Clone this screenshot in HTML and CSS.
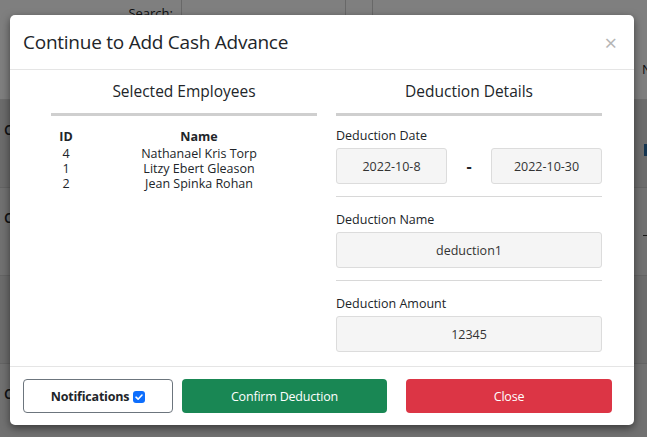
FILE: index.html
```html
<!DOCTYPE html>
<html lang="en">
<head>
<meta charset="utf-8">
<title>Continue to Add Cash Advance</title>
<link rel="stylesheet" href="styles.css">
</head>
<body>
<div class="page">
  <div class="page-top">
    <div class="search-label">Search:</div>
    <div class="search-box"></div>
    <div class="search-gap"></div>
    <div class="search-rest"><span class="edge-text">N</span></div>
  </div>
  <div class="page-table">
    <div class="prow prow-a"><span class="cell-c">C</span><span class="cell-r"><span class="blue-mark"></span></span></div>
    <div class="prow prow-b"><span class="cell-c">C</span><span class="cell-r"><span class="dash-mark"></span></span></div>
    <div class="prow prow-a"><span class="cell-c"></span><span class="cell-r"></span></div>
    <div class="prow prow-b"><span class="cell-c">C</span><span class="cell-r"></span></div>
  </div>
</div>
<div class="backdrop"></div>

<div class="modal">
  <div class="modal-header">
    <h4 class="modal-title">Continue to Add Cash Advance</h4>
    <span class="close">&times;</span>
  </div>
  <div class="modal-body">
    <div class="col">
      <h5 class="col-title">Selected Employees</h5>
      <hr class="col-rule">
      <table class="emp-table">
        <thead>
          <tr><th class="c-id">ID</th><th>Name</th></tr>
        </thead>
        <tbody>
          <tr><td class="c-id">4</td><td>Nathanael Kris Torp</td></tr>
          <tr><td class="c-id">1</td><td>Litzy Ebert Gleason</td></tr>
          <tr><td class="c-id">2</td><td>Jean Spinka Rohan</td></tr>
        </tbody>
      </table>
    </div>
    <div class="col">
      <h5 class="col-title">Deduction Details</h5>
      <hr class="col-rule">
      <div class="group">
        <label class="label">Deduction Date</label>
        <div class="date-row">
          <div class="field">2022-10-8</div>
          <span class="dash">-</span>
          <div class="field">2022-10-30</div>
        </div>
      </div>
      <hr class="sep">
      <div class="group">
        <label class="label">Deduction Name</label>
        <div class="field">deduction1</div>
      </div>
      <hr class="sep">
      <div class="group">
        <label class="label">Deduction Amount</label>
        <div class="field">12345</div>
      </div>
    </div>
  </div>
  <div class="modal-footer">
    <button class="btn btn-notify">Notifications <span class="check"><svg viewBox="0 0 12 12" width="12" height="12"><path d="M3 6.2 L5.1 8.2 L9 4" fill="none" stroke="#fff" stroke-width="1.6" stroke-linecap="round" stroke-linejoin="round"/></svg></span></button>
    <button class="btn btn-confirm">Confirm Deduction</button>
    <button class="btn btn-close">Close</button>
  </div>
</div>
</body>
</html>
```

FILE: styles.css
```css
* { box-sizing: border-box; }
html, body { margin: 0; padding: 0; }
body {
  width: 647px;
  height: 437px;
  overflow: hidden;
  background: #fff;
  font-family: "Open Sans", "Noto Sans", sans-serif;
  color: #212529;
  position: relative;
}

/* faux page beneath the backdrop */
.page { width: 647px; }
.page-top {
  display: flex;
  height: 100px;
  border-bottom: 1px solid #ddd;
}
.search-label {
  width: 181px;
  padding: 4px 8px 0 0;
  text-align: right;
  font-size: 13px;
}
.search-box { width: 165px; border-left: 1px solid #d0d0d0; border-right: 1px solid #d0d0d0; }
.search-gap { width: 27px; border-right: 1px solid #d0d0d0; }
.search-rest {
  flex: 1;
  display: flex;
  justify-content: flex-end;
  padding-top: 60px;
  border-top: 0;
}
.edge-text { font-size: 13px; width: 5px; overflow: hidden; line-height: 18px; height: 18px; }
.page-table { display: flex; flex-direction: column; }
.prow {
  display: flex;
  justify-content: space-between;
  height: 88px;
  border-bottom: 1px solid #c8c8c8;
  font-size: 14px;
  padding-top: 20px;
}
.prow-a { background: #d8d8d8; }
.prow-b { background: #e2e2e2; }
.cell-c { padding-left: 4px; font-weight: 600; }
.cell-r { width: 5px; overflow: hidden; }
.blue-mark { display: block; width: 3px; height: 12px; margin: 24px 0 0 2px; background: #2a6aa0; }
.dash-mark { display: block; width: 4px; height: 1px; margin: 27px 0 0 1px; background: #333; }

.backdrop {
  position: absolute;
  inset: 0;
  background: rgba(0, 0, 0, 0.5);
}

/* modal */
.modal {
  position: absolute;
  left: 10px;
  top: 15px;
  width: 624px;
  height: 410px;
  background: #fff;
  border-radius: 5px;
  box-shadow: 0 3px 9px rgba(0, 0, 0, 0.5);
  display: flex;
  flex-direction: column;
}
.modal-header {
  height: 55px;
  display: flex;
  align-items: center;
  justify-content: space-between;
  padding: 0 17px 0 13px;
  border-bottom: 1px solid #e5e5e5;
}
.modal-title {
  margin: 0;
  font-size: 19px;
  font-weight: 400;
  color: #212529;
  letter-spacing: -0.25px;
}
.close {
  font-size: 22px;
  color: #b5b5b5;
  line-height: 1;
}
.modal-body {
  flex: 1;
  display: flex;
  gap: 19px;
  padding: 10px 32px 0 41px;
}
.col { flex: 1; display: flex; flex-direction: column; }
.col-title {
  margin: 0;
  font-size: 15.5px;
  font-weight: 400;
  line-height: 22px;
  text-align: center;
  color: #212529;
}
.col-rule {
  margin: 11px 0 0;
  border: 0;
  border-top: 3px solid #cfcfcf;
}
.emp-table {
  margin-top: 13px;
  width: 100%;
  border-collapse: collapse;
  font-size: 12.5px;
  line-height: 15px;
}
.emp-table th { font-weight: 700; padding: 0 0 2px; text-align: center; }
.emp-table td { padding: 0; text-align: center; }
.emp-table .c-id { width: 30px; }

.group { display: flex; flex-direction: column; gap: 3px; }
.col-rule + .group { margin-top: 11px; }
.sep + .group { padding-top: 2px; }
.label {
  font-size: 12.5px;
  line-height: 18px;
  color: #212529;
}
.field {
  height: 36px;
  background: #f5f5f5;
  border: 1px solid #dcdcdc;
  border-radius: 3px;
  display: flex;
  align-items: center;
  justify-content: center;
  font-size: 12.5px;
  color: #333;
}
.date-row { display: flex; align-items: center; }
.date-row .field { width: 111px; }
.dash {
  flex: 1;
  text-align: center;
  font-weight: 700;
  font-size: 16px;
}
.sep {
  margin: 12px 0;
  border: 0;
  border-top: 1px solid #d8d8d8;
}

.modal-footer {
  height: 59px;
  border-top: 1px solid #e5e5e5;
  display: flex;
  align-items: center;
  padding: 0 22px 0 13px;
}
.btn {
  height: 34px;
  border-radius: 4px;
  font-family: inherit;
  font-size: 12.5px;
  border: 1px solid transparent;
  display: flex;
  align-items: center;
  justify-content: center;
  padding: 0;
  letter-spacing: -0.2px;
}
.btn-notify {
  width: 150px;
  background: #fff;
  border-color: #6c757d;
  color: #212529;
  font-weight: 700;
  gap: 4px;
}
.check {
  width: 12px;
  height: 12px;
  border-radius: 3px;
  background: #0d6efd;
  display: inline-flex;
  margin-top: 2px;
}
.btn-confirm {
  width: 205px;
  margin-left: 9px;
  background: #198754;
  color: #fff;
}
.btn-close {
  width: 206px;
  margin-left: auto;
  background: #dc3545;
  color: #fff;
}
```
